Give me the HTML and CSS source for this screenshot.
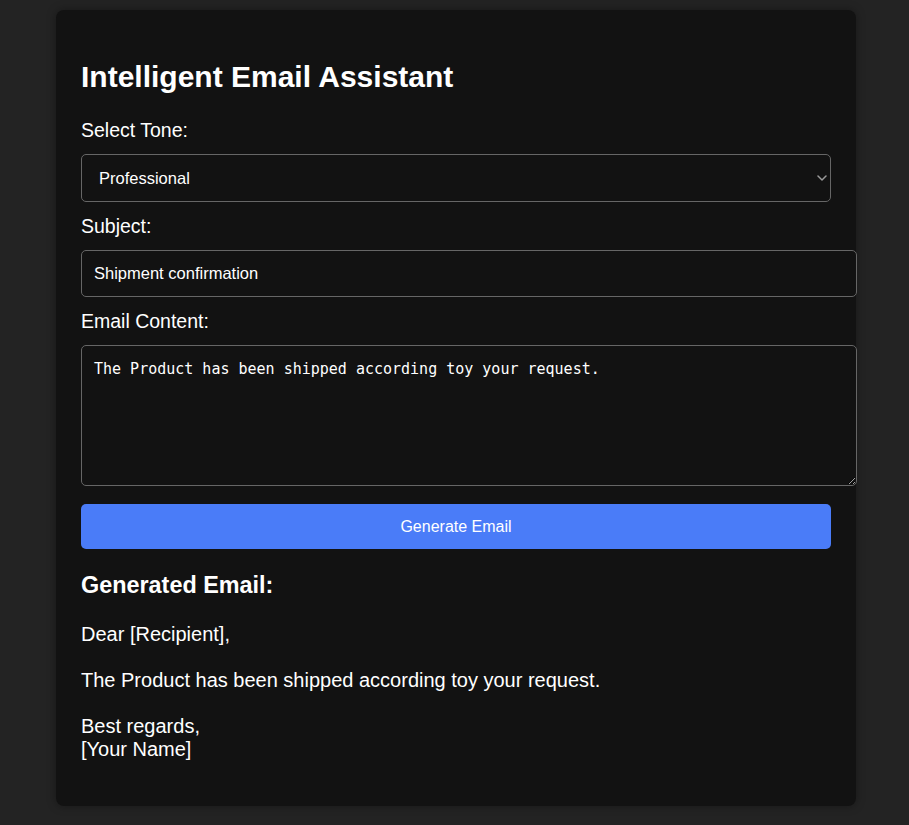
FILE: index.html
```html
<!DOCTYPE html>
<html lang="en">
<head>
<meta charset="utf-8">
<title>Intelligent Email Assistant</title>
<link rel="stylesheet" href="styles.css">
</head>
<body>
<div class="card">
  <h1 class="title">Intelligent Email Assistant</h1>

  <label class="field-label" for="tone">Select Tone:</label>
  <div class="select-wrap">
    <select id="tone" class="select">
      <option>Professional</option>
      <option>Friendly</option>
      <option>Casual</option>
    </select>
    <svg class="chevron" width="10" height="6" viewBox="0 0 10 6" aria-hidden="true">
      <path d="M1 1 L5 5 L9 1" fill="none" stroke="#9a9a9a" stroke-width="1.5" stroke-linecap="round" stroke-linejoin="round"/>
    </svg>
  </div>

  <label class="field-label" for="subject">Subject:</label>
  <input id="subject" class="text-input" type="text" value="Shipment confirmation">

  <label class="field-label" for="content">Email Content:</label>
  <textarea id="content" class="text-area">The Product has been shipped according toy your request.</textarea>

  <button class="generate-btn" type="button">Generate Email</button>

  <h3 class="result-title">Generated Email:</h3>
  <div class="result">Dear [Recipient],

The Product has been shipped according toy your request.

Best regards,
[Your Name]</div>
</div>
</body>
</html>
```

FILE: styles.css
```css
html, body {
  margin: 0;
}

body {
  background: #232323;
  padding: 10px 0 19px 3px;
  font-family: "Liberation Sans", Arial, sans-serif;
  font-size: 20px;
  color: #ffffff;
}

.card {
  box-sizing: border-box;
  width: 800px;
  margin: 0 auto;
  padding: 25px;
  background: #121212;
  border-radius: 8px;
  box-shadow: 0 0 10px rgba(0, 0, 0, 0.35);
}

.title {
  font-size: 30px;
  font-weight: bold;
  line-height: normal;
  margin: 25px 0 24.5px;
}

.field-label {
  display: block;
  font-size: 19.5px;
  line-height: 23px;
  margin-bottom: 12.5px;
}

.select-wrap {
  position: relative;
  margin-bottom: 12.5px;
}

.select {
  display: block;
  box-sizing: border-box;
  width: 100%;
  height: 48px;
  margin: 0;
  padding: 0 17px;
  -webkit-appearance: none;
  appearance: none;
  background: #121212;
  color: #ffffff;
  border: 1px solid #666666;
  border-radius: 5px;
  font-family: "Liberation Sans", Arial, sans-serif;
  font-size: 16.5px;
  outline: none;
}

.chevron {
  position: absolute;
  right: 4px;
  top: 21px;
  pointer-events: none;
}

.text-input {
  display: block;
  box-sizing: content-box;
  width: 100%;
  height: 21px;
  margin: 0 0 12.5px;
  padding: 12px;
  background: #121212;
  color: #ffffff;
  border: 1px solid #666666;
  border-radius: 5px;
  font-family: "Liberation Sans", Arial, sans-serif;
  font-size: 16.5px;
  outline: none;
}

.text-area {
  display: block;
  box-sizing: content-box;
  width: 100%;
  height: 115px;
  margin: 0 0 18px;
  padding: 13px 12px 11px;
  background: #121212;
  color: #ffffff;
  border: 1px solid #666666;
  border-radius: 5px;
  font-family: "DejaVu Sans Mono", "Liberation Mono", monospace;
  font-size: 15px;
  line-height: 20px;
  outline: none;
}

.generate-btn {
  display: block;
  width: 100%;
  height: 45px;
  margin: 0;
  border: none;
  border-radius: 5px;
  background: #4a7cf8;
  color: #ffffff;
  font-family: "Liberation Sans", Arial, sans-serif;
  font-size: 16px;
  cursor: pointer;
}

.result-title {
  font-size: 23.4px;
  font-weight: bold;
  line-height: normal;
  margin: 23.4px 0;
}

.result {
  white-space: pre-line;
  font-size: 20px;
  line-height: normal;
  margin-bottom: 20px;
}
```
